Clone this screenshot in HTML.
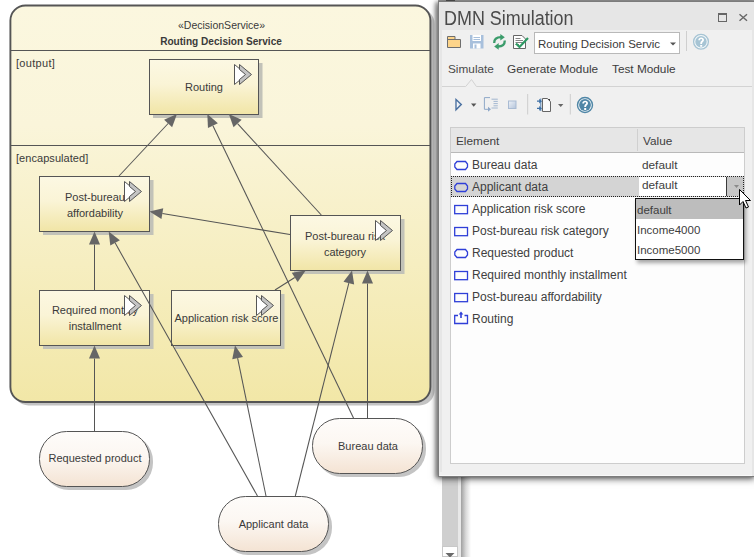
<!DOCTYPE html>
<html><head><meta charset="utf-8">
<style>
html,body{margin:0;padding:0;}
body{width:754px;height:557px;overflow:hidden;position:relative;background:#fff;font-family:"Liberation Sans",sans-serif;}
#dg{position:absolute;left:0;top:0;}
.abs{position:absolute;}
</style></head><body>
<svg id="dg" width="754" height="557" viewBox="0 0 754 557" font-family="Liberation Sans, sans-serif">
<defs>
<linearGradient id="gc" x1="0" y1="0" x2="0" y2="1">
<stop offset="0" stop-color="#fbf7df"/><stop offset="0.3" stop-color="#faf5da"/><stop offset="1" stop-color="#f2e7a7"/>
</linearGradient>
<linearGradient id="gb" x1="0" y1="0" x2="0" y2="1">
<stop offset="0" stop-color="#fcf8e3"/><stop offset="0.45" stop-color="#faf4d6"/><stop offset="1" stop-color="#f1e5a6"/>
</linearGradient>
<linearGradient id="go" x1="0" y1="0" x2="0" y2="1">
<stop offset="0" stop-color="#fefcfa"/><stop offset="0.45" stop-color="#fcf7f2"/><stop offset="1" stop-color="#f4e3d3"/>
</linearGradient>
<filter id="blur1" x="-10%" y="-10%" width="120%" height="120%"><feGaussianBlur stdDeviation="1"/></filter><filter id="blur05" x="-10%" y="-10%" width="120%" height="120%"><feGaussianBlur stdDeviation="0.6"/></filter>
<g id="ic">
<path d="M0.5 0.5 L12.5 10.5 L0.5 20.5 Z" fill="#fff" stroke="#555" stroke-width="1"/>
<path d="M5.5 0.5 L17.5 10.5 L5.5 20.5 L5.5 15.5 L11.5 10.5 L5.5 5.5 Z" fill="#c4c4c4" stroke="#555" stroke-width="1" stroke-linejoin="miter"/>
</g>
</defs>
<!-- container -->
<rect x="13.5" y="8.5" width="421" height="397" rx="15" fill="#c4c4c4" filter="url(#blur05)"/>
<rect x="10.4" y="5.5" width="420" height="396.5" rx="15" fill="url(#gc)" stroke="#555" stroke-width="1.9"/>
<line x1="11" y1="50.5" x2="430" y2="50.5" stroke="#555" stroke-width="1"/>
<line x1="11" y1="145.5" x2="430" y2="145.5" stroke="#555" stroke-width="1"/>
<g fill="#3a3a3a" font-size="11">
<text x="221.5" y="29" text-anchor="middle" font-size="10.5">«DecisionService»</text>
<text x="221" y="45" text-anchor="middle" font-weight="bold" font-size="10.1">Routing Decision Service</text>
<text x="16" y="67" font-size="11" letter-spacing="0.3">[output]</text>
<text x="16" y="162" font-size="11" letter-spacing="0.05">[encapsulated]</text>
</g>
<!-- shadows -->
<g fill="#c2c2b8" filter="url(#blur05)">
<rect x="153" y="63" width="109.5" height="55"/>
<rect x="43" y="180" width="110.5" height="55"/>
<rect x="43" y="294" width="110.5" height="55"/>
<rect x="175" y="294" width="109.5" height="55"/>
<rect x="294" y="219" width="110.5" height="55"/>
</g><g fill="#c4c4c4" filter="url(#blur05)">
<rect x="42" y="434" width="111" height="56" rx="27"/>
<rect x="315" y="421" width="111" height="56" rx="27"/>
<rect x="221" y="499" width="111" height="56" rx="27"/>
</g>
<!-- boxes -->
<g stroke="#555" stroke-width="1" fill="url(#gb)">
<rect x="149.5" y="59.5" width="109" height="55"/>
<rect x="39.5" y="176.5" width="110" height="55"/>
<rect x="39.5" y="290.5" width="110" height="55"/>
<rect x="171.5" y="290.5" width="109" height="55"/>
<rect x="290.5" y="215.5" width="110" height="55"/>
</g>
<g stroke="#555" stroke-width="1" fill="url(#go)">
<rect x="39.5" y="431.5" width="110" height="55" rx="27" ry="27"/>
<rect x="312.5" y="418.5" width="110" height="55" rx="27" ry="27"/>
<rect x="218.5" y="496.5" width="110" height="55" rx="27" ry="27"/>
</g>
<g fill="#3a3a3a" font-size="11" text-anchor="middle">
<text x="204" y="90.7">Routing</text>
<text x="95" y="200.5">Post-bureau</text>
<text x="95" y="216.5">affordability</text>
<text x="95" y="313.5">Required monthly</text>
<text x="95" y="329.5">installment</text>
<text x="226.5" y="321.5">Application risk score</text>
<text x="345" y="240">Post-bureau risk</text>
<text x="345" y="256">category</text>
<text x="95" y="462">Requested product</text>
<text x="273.5" y="527.5">Applicant data</text>
<text x="368" y="450">Bureau data</text>
</g>
<use href="#ic" x="234" y="64"/>
<use href="#ic" x="124" y="181"/>
<use href="#ic" x="124" y="295"/>
<use href="#ic" x="256" y="295"/>
<use href="#ic" x="375" y="220"/>
<!-- connectors -->
<g stroke="#555" stroke-width="1.05" fill="none">
<line x1="257.5" y1="496" x2="115.07" y2="242.83"/>
<line x1="266" y1="496" x2="237.62" y2="358.23"/>
<line x1="295.3" y1="496" x2="348.83" y2="283.11"/>
<line x1="353.5" y1="418" x2="212.93" y2="125.72"/>
<line x1="367.5" y1="418" x2="367.5" y2="283.5"/>
<line x1="94.5" y1="431" x2="94.5" y2="358.5"/>
<line x1="94.5" y1="290" x2="94.5" y2="244.5"/>
<line x1="119" y1="176" x2="168.12" y2="123.49"/>
<line x1="321.3" y1="215" x2="237.58" y2="123.59"/>
<line x1="290" y1="234.5" x2="162.33" y2="213.6"/>
<line x1="275" y1="290" x2="294.73" y2="277.47"/>
</g>
<g fill="#666">
<path d="M108.7 231.5 L119.87 240.13 L110.28 245.53 Z"/>
<path d="M235 345.5 L243.01 357.12 L232.24 359.34 Z"/>
<path d="M352 270.5 L354.16 284.45 L343.5 281.77 Z"/>
<path d="M207.3 114 L217.89 123.33 L207.98 128.1 Z"/>
<path d="M367.5 270.5 L373 283.5 L362 283.5 Z"/>
<path d="M94.5 345.5 L100 358.5 L89 358.5 Z"/>
<path d="M94.5 231.5 L100 244.5 L89 244.5 Z"/>
<path d="M177 114 L172.14 127.25 L164.1 119.74 Z"/>
<path d="M228.8 114 L241.64 119.87 L233.52 127.3 Z"/>
<path d="M149.5 211.5 L163.22 208.17 L161.44 219.03 Z"/>
<path d="M305.7 270.5 L297.68 282.11 L291.78 272.83 Z"/>
</g>
</svg>

<!-- right panel -->
<!-- scrollbar -->
<div class="abs" style="left:442px;top:470px;width:16px;height:87px;background:#cfcfcf;"></div>
<div class="abs" style="left:458px;top:470px;width:3px;height:87px;background:#e8e8e8;"></div>
<div class="abs" style="left:461px;top:470px;width:10px;height:87px;background:linear-gradient(to right,#a0a0a0,#dadada 50%,#fff);"></div>
<div class="abs" style="left:442px;top:546px;width:16px;height:11px;background:#fff;border:1px solid #c8c8c8;box-sizing:border-box;"></div>
<svg class="abs" style="left:442px;top:546px" width="16" height="11"><path d="M3.5 7 H12.5 L8 11.5 Z" fill="#6a6a6a"/></svg>

<div class="abs" style="left:438px;top:0;width:316px;height:1px;background:#a2a2a2;"></div>
<div class="abs" style="left:446px;top:0;width:9px;height:1px;background:#555;"></div>
<div class="abs" style="left:438px;top:1px;width:318px;height:476px;background:#f0f0f0;border:1px solid #7c7c7c;box-sizing:border-box;box-shadow:-1px 2px 7px rgba(0,0,0,0.6),-3px 1px 3px rgba(0,0,0,0.22);"></div>
<div class="abs" style="left:439px;top:2px;width:316px;height:474px;border-left:1px solid #ececec;border-bottom:1px solid #f9f9f9;box-sizing:border-box;"></div>
<div class="abs" style="left:439px;top:2px;width:315px;height:28px;background:#e6e6e6;"></div>
<div class="abs" style="left:440px;top:30px;width:2px;height:442px;background:#e6e6e6;"></div>
<div class="abs" style="left:752px;top:30px;width:2px;height:446px;background:#e6e6e6;"></div>
<div class="abs" style="left:444px;top:8px;font-size:19.3px;color:#4a4a4a;white-space:nowrap;line-height:22px;transform:scaleX(0.93);transform-origin:0 0;">DMN Simulation</div>
<svg class="abs" style="left:436px;top:0" width="318" height="480" viewBox="436 0 318 480">
 <!-- maximize -->
 <rect x="718.5" y="13.5" width="8" height="8" fill="none" stroke="#666" stroke-width="1"/>
 <line x1="718" y1="14" x2="727" y2="14" stroke="#666" stroke-width="2"/>
 <!-- close -->
 <path d="M739.5 14.2 L747 20.8 M747 14.2 L739.5 20.8" stroke="#666" stroke-width="1.4"/>
 <!-- folder -->
 <path d="M447.5 36.5 H455 V39.5 H460.5 V47.5 H447.5 Z" fill="#fdd48a" stroke="#6e6e6e" stroke-width="1"/>
 <line x1="447.5" y1="39.5" x2="455" y2="39.5" stroke="#6e6e6e" stroke-width="1"/>
 <!-- floppy -->
 <rect x="470" y="35" width="13.5" height="13.5" fill="#a8c0dc"/>
 <rect x="472.5" y="35" width="8.5" height="6" fill="#fff"/>
 <line x1="473.5" y1="37.5" x2="480" y2="37.5" stroke="#a8c0dc" stroke-width="1"/>
 <line x1="473.5" y1="39.5" x2="480" y2="39.5" stroke="#a8c0dc" stroke-width="1"/>
 <rect x="473" y="43.5" width="7.5" height="5" fill="#fff"/>
 <rect x="474.5" y="44.5" width="2" height="4" fill="#a8c0dc"/>
 <!-- refresh -->
 <path d="M494.2 43 C494.2 39.5 496.5 37.2 501 37.2" fill="none" stroke="#3b9c6b" stroke-width="2.3"/>
 <path d="M500.3 34 L504.8 37.2 L500.3 40.6 Z" fill="#3b9c6b"/>
 <path d="M504.8 40.5 C504.8 44 502.5 46.5 498 46.5" fill="none" stroke="#3b9c6b" stroke-width="2.3"/>
 <path d="M498.7 43 L494.2 46.5 L498.7 49.8 Z" fill="#3b9c6b"/>
 <!-- doc check -->
 <path d="M513.5 35.5 H522 L525.5 39 V48.5 H513.5 Z" fill="#fff" stroke="#666" stroke-width="1"/>
 <g stroke="#777" stroke-width="0.9"><line x1="515.5" y1="38.5" x2="520.5" y2="38.5"/><line x1="515.5" y1="40.5" x2="523" y2="40.5"/><line x1="515.5" y1="42.5" x2="523" y2="42.5"/><line x1="515.5" y1="44.5" x2="519" y2="44.5"/></g>
 <path d="M516 43.5 L519.5 47 L528 38" fill="none" stroke="#2e9a64" stroke-width="2.2"/>
 <!-- combo -->
 <rect x="534.5" y="32.5" width="145" height="21" fill="#fff" stroke="#b9b9b9"/>
 <path d="M670 42.5 H676 L673 45.5 Z" fill="#555"/>
 <line x1="686.5" y1="31" x2="686.5" y2="51" stroke="#cfcfcf"/>
 <!-- help light -->
 <circle cx="701" cy="41.8" r="7.4" fill="#f4f8fa" stroke="#a6c4d4" stroke-width="1.3"/>
 <circle cx="701" cy="41.8" r="5.7" fill="#a6c4d4"/>
 <path transform="translate(0 0.0)" d="M698.3 40.2 C698.3 38.4 699.6 37.6 701.2 37.6 C702.9 37.6 704 38.6 704 40 C704 41.6 702.3 42 702.1 43.3 V43.9 H700.3 V43 C700.5 41.2 702.2 40.9 702.2 40.1 C702.2 39.5 701.8 39.1 701.2 39.1 C700.5 39.1 700.1 39.5 700.1 40.3 Z M700.2 44.9 H702.2 V46.7 H700.2 Z" fill="#fff"/>
 <!-- tab line -->
 <path d="M442 86.5 H465.7 L471.5 79.5 L476.4 86.5 H752" fill="none" stroke="#d3d3d3" stroke-width="1"/>
 <!-- toolbar 2 -->
 <defs><linearGradient id="plg" x1="0" y1="0" x2="1" y2="0"><stop offset="0" stop-color="#ffffff"/><stop offset="1" stop-color="#c9d6e6"/></linearGradient></defs>
 <path d="M456 99.6 L461.3 104.6 L456 109.8 Z" fill="url(#plg)" stroke="#4a70a0" stroke-width="1.4" stroke-linejoin="miter"/>
 <path d="M471 103.6 H476.4 L473.7 106.7 Z" fill="#555"/>
 <path d="M490 97.6 H484.4 V109.3 H488" fill="none" stroke="#8fa8c8" stroke-width="1"/>
 <path d="M488 106.8 L491 109.3 L488 111.8 Z" fill="#8fa8c8"/>
 <g stroke="#8fa8c8" stroke-width="0.8"><line x1="491.5" y1="99.2" x2="497.8" y2="99.2"/><line x1="493.5" y1="101.4" x2="497.8" y2="101.4"/><line x1="493.5" y1="103.6" x2="497.8" y2="103.6"/><line x1="493.5" y1="105.8" x2="497.8" y2="105.8"/><line x1="491.5" y1="108" x2="497.8" y2="108"/></g>
 <defs><linearGradient id="stg" x1="0" y1="0" x2="1" y2="1"><stop offset="0" stop-color="#eef2f8"/><stop offset="1" stop-color="#b4c4da"/></linearGradient></defs>
 <rect x="508.5" y="101" width="7.5" height="7.5" fill="url(#stg)" stroke="#a9bbd3" stroke-width="1"/>
 <line x1="527.7" y1="94" x2="527.7" y2="114.5" stroke="#cdcdcd"/>
 <path d="M542.5 98.5 H547.5 L550.5 101.5 V111.5 H542.5 Z" fill="#fafafa" stroke="#666" stroke-width="1"/>
 <path d="M547.5 99 L550 99 L550 101.5 Z" fill="#444"/>
 <path d="M537 101.2 H540.5 M537 108.4 H540.5" fill="none" stroke="#3d6fa5" stroke-width="1.2"/>
 <path d="M539.2 98.8 L542 101.2 L539.2 103.6 Z M539.2 106 L542 108.4 L539.2 110.8 Z" fill="#3d6fa5"/>
 <line x1="540.8" y1="98.5" x2="540.8" y2="111" stroke="#3d6fa5" stroke-width="0.9"/>
 <path d="M558 104 H563.4 L560.7 107.1 Z" fill="#666"/>
 <line x1="570.3" y1="94" x2="570.3" y2="114.5" stroke="#cdcdcd"/>
 <circle cx="585" cy="105" r="7.5" fill="#f0f5f8" stroke="#4f86a6" stroke-width="1.4"/>
 <circle cx="585" cy="105" r="5.9" fill="#4f86a6"/>
 <path transform="translate(-116 63.2)" d="M698.3 40.2 C698.3 38.4 699.6 37.6 701.2 37.6 C702.9 37.6 704 38.6 704 40 C704 41.6 702.3 42 702.1 43.3 V43.9 H700.3 V43 C700.5 41.2 702.2 40.9 702.2 40.1 C702.2 39.5 701.8 39.1 701.2 39.1 C700.5 39.1 700.1 39.5 700.1 40.3 Z M700.2 44.9 H702.2 V46.7 H700.2 Z" fill="#fff"/>
</svg>
<div class="abs" style="left:538px;top:37px;font-size:11.5px;color:#3a3a3a;white-space:nowrap;line-height:14px;">Routing Decision Servic</div>
<div class="abs" style="left:448px;top:62px;font-size:11.8px;color:#4a4a4a;white-space:nowrap;line-height:14px;">Simulate</div>
<div class="abs" style="left:507px;top:62px;font-size:11.8px;color:#3c3c3c;white-space:nowrap;line-height:14px;">Generate Module</div>
<div class="abs" style="left:612px;top:62px;font-size:11.8px;color:#3c3c3c;white-space:nowrap;line-height:14px;">Test Module</div>
<!-- grid -->
<div class="abs" style="left:450px;top:127px;width:295px;height:337px;background:#fdfdfd;border:1px solid #cdcdcd;box-sizing:border-box;"></div>
<div class="abs" style="left:451px;top:128px;width:293px;height:24px;background:#e6e6e6;border-bottom:1px solid #b9b9b9;"></div>
<div class="abs" style="left:637px;top:129px;width:1px;height:22px;background:#d0d0d0;"></div>
<div class="abs" style="left:456px;top:134px;font-size:11.8px;color:#404040;line-height:14px;">Element</div>
<div class="abs" style="left:643px;top:134px;font-size:11.8px;color:#404040;line-height:14px;">Value</div>
<div class="abs" style="left:451px;top:176px;width:293px;height:21px;background:#d4d4d4;border:1px dotted #222;box-sizing:border-box;"></div>
<div class="abs" style="left:639px;top:177px;width:88px;height:19px;background:#fff;"></div>
<div class="abs" style="left:727px;top:177px;width:16px;height:19px;background:#c6c6c6;"></div>
<div class="abs" style="left:726px;top:177px;width:1px;height:19px;background:#3a3a3a;"></div>
<svg class="abs" style="left:436px;top:120px" width="318" height="220" viewBox="436 120 318 220">
 <g fill="none" stroke="#2f3fd8" stroke-width="1.3">
  <path d="M457 161.5 H465.5 L467.5 164 V167 L465.5 169.5 H457 L454.8 167 V164 Z"/>
  <path d="M457 183.5 H465.5 L467.5 186 V189 L465.5 191.5 H457 L454.8 189 V186 Z"/>
  <rect x="454.7" y="205.5" width="12.8" height="8.2"/>
  <rect x="454.7" y="227.5" width="12.8" height="8.2"/>
  <path d="M457 249.5 H465.5 L467.5 252 V255 L465.5 257.5 H457 L454.8 255 V252 Z"/>
  <rect x="454.7" y="271.5" width="12.8" height="8.2"/>
  <rect x="454.7" y="293.5" width="12.8" height="8.2"/>
  <path d="M458 315.5 H454.7 V323.5 H467.5 V315.5 H464.5"/>
 </g>
 <path d="M461 311.5 L463.3 314.5 H461.8 V318 H460.2 V314.5 H458.7 Z" fill="#2f3fd8"/>
 <path d="M734 185 H739 L736.5 188 Z" fill="#8a8a8a"/>
</svg>
<div class="abs" style="left:472px;top:158px;font-size:12px;color:#404040;line-height:14px;white-space:nowrap;">
<div style="height:22px">Bureau data</div>
<div style="height:22px">Applicant data</div>
<div style="height:22px">Application risk score</div>
<div style="height:22px">Post-bureau risk category</div>
<div style="height:22px">Requested product</div>
<div style="height:22px">Required monthly installment</div>
<div style="height:22px">Post-bureau affordability</div>
<div style="height:22px">Routing</div>
</div>
<div class="abs" style="left:642px;top:158px;font-size:11.8px;color:#404040;line-height:14px;">default</div>
<div class="abs" style="left:642px;top:178px;font-size:11.8px;color:#404040;line-height:14px;">default</div>
<!-- dropdown list -->
<div class="abs" style="left:635px;top:198px;width:109px;height:62px;background:#fff;border:1px solid #111;box-sizing:border-box;box-shadow:2px 3px 4px rgba(0,0,0,0.35);"></div>
<div class="abs" style="left:636px;top:199px;width:107px;height:20px;background:#bdbdbd;"></div>
<div class="abs" style="left:637px;top:203px;font-size:11.5px;color:#404040;line-height:14px;white-space:nowrap;">
<div style="height:20px">default</div>
<div style="height:20px">Income4000</div>
<div style="height:20px">Income5000</div>
</div>
<!-- cursor -->
<svg class="abs" style="left:735px;top:185px" width="19" height="26" viewBox="0 0 19 26">
 <path d="M4.5 4.5 L4.5 20 L8 16.5 L11 23 L13.5 22 L10.5 15.5 L15.5 15.5 Z" fill="#fff" stroke="#000" stroke-width="1"/>
</svg>

</body></html>
